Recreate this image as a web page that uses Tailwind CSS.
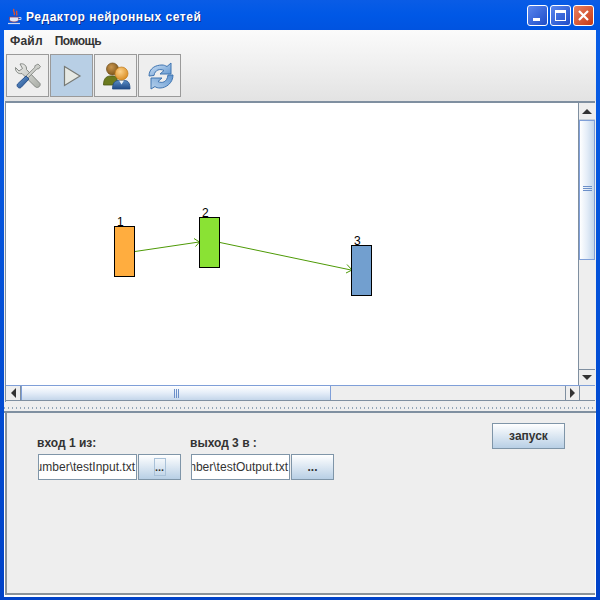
<!DOCTYPE html>
<html lang="ru">
<head>
  <meta charset="UTF-8" />
  <title>Редактор нейронных сетей</title>
  <script src="https://cdn.jsdelivr.net/npm/@tailwindcss/browser@4"></script>
</head>
<body class="w-[600px] h-[600px] overflow-hidden bg-[#0055e5] font-['Liberation_Sans',sans-serif]">
  <!-- окно -->
  <div class="w-[600px] h-[600px] flex flex-col bg-gradient-to-b from-[#0a5fe8] to-[#0042c8]">

    <!-- заголовок -->
    <div class="h-[30px] shrink-0 flex items-center pl-[7px] pr-[6px] bg-gradient-to-b from-[#0a5ce6] via-[#0058e6] to-[#0053e0]">
      <svg width="16" height="17" viewBox="0 0 16 17" class="shrink-0 mt-[2px]">
        <path d="M7 1c-2 2.500 2 3.500 0 6M10 3c-1.500 2 1 2.500-.5 4.500" fill="none" stroke="#e8502a" stroke-width="1.300"/>
        <path d="M2.500 9h9v2.500c0 1.500-1.500 2.500-4.500 2.500s-4.500-1-4.500-2.500z" fill="#dfe6f5" stroke="#8a3a5a" stroke-width="0.800"/>
        <path d="M11.500 9.500h2.500v2h-2.500" fill="none" stroke="#c4d0ea"/>
        <path d="M1 15.500h12" stroke="#d0d8f0" stroke-width="1.200"/>
      </svg>
      <div class="ml-[3px] mt-[3px] text-[12px] leading-none font-bold text-white tracking-[0.55px] [text-shadow:1px_1px_0_#0a2f90]">Редактор нейронных сетей</div>
      <div class="ml-auto flex gap-[2px]">
        <div class="w-[21px] h-[21px] rounded-[3px] border border-white bg-gradient-to-br from-[#5a86ee] to-[#1f4cc8] flex items-end pl-[5px] pb-[4px]">
          <div class="w-[7px] h-[3px] bg-white"></div>
        </div>
        <div class="w-[21px] h-[21px] rounded-[3px] border border-white bg-gradient-to-br from-[#5a86ee] to-[#1f4cc8] flex items-center justify-center">
          <div class="w-[11px] h-[11px] border border-white border-t-[3px]"></div>
        </div>
        <div class="w-[21px] h-[21px] rounded-[3px] border border-white bg-gradient-to-br from-[#e8805e] to-[#c8360e] flex items-center justify-center">
          <svg width="13" height="13" viewBox="0 0 13 13"><path d="M2 2l9 9M11 2l-9 9" stroke="#fff" stroke-width="2.200"/></svg>
        </div>
      </div>
    </div>

    <!-- клиентская область -->
    <div class="flex-1 min-h-0 mx-[4px] mb-[3px] flex flex-col bg-[#eeeeee]">

      <!-- меню и панель инструментов -->
      <div class="h-[71px] shrink-0 bg-gradient-to-b from-[#fbfbfb] to-[#e3e3e3] flex flex-col">
        <div class="h-[22px] flex items-center pl-[6px] gap-[12px] text-[12px] font-bold text-[#333333]">
          <span class="tracking-[0.2px]">Файл</span>
          <span class="tracking-[-0.5px]">Помощь</span>
        </div>
        <div class="flex gap-[1px] pl-[2px] pt-[2px]">
          <div class="w-[43px] h-[43px] border border-[#9a9a9a] bg-[#eeeeee] flex items-center justify-center">
            <svg width="30" height="30" viewBox="0 0 30 30">
              <defs>
                <linearGradient id="metal" x1="0" y1="0" x2="1" y2="1"><stop offset="0" stop-color="#eeeeec"/><stop offset="1" stop-color="#a9ada6"/></linearGradient>
                <linearGradient id="grip" x1="0" y1="0" x2="1" y2="1"><stop offset="0" stop-color="#6a9fd8"/><stop offset="1" stop-color="#204a87"/></linearGradient>
              </defs>
              <path d="M7 3c3.500-1 7 1.500 6.500 5.500L27 22.500c1 2.500-2 5-4.500 3.500L9 12.500C5.500 13.500 2 10.500 2.500 6.500L6 10l3.500-2.500z" fill="url(#metal)" stroke="#7b7f7a" stroke-width="0.900"/>
              <path d="M25 3l2.500 2.500-2 2.500-1.500-.2L14 18l-2-2 10-9.800-.2-1.400z" fill="url(#metal)" stroke="#7b7f7a" stroke-width="0.800"/>
              <path d="M13 15l3 3-8 8.500c-2 1.500-5-1-3.500-3.500z" fill="url(#grip)" stroke="#204a87" stroke-width="0.900"/>
            </svg>
          </div>
          <div class="w-[43px] h-[43px] border border-[#9a9a9a] bg-[#b8cfe5] flex items-center justify-center">
            <svg width="20" height="24" viewBox="0 0 20 24">
              <path d="M2.500 2.500L18 12 2.500 21.500z" fill="#e6e9e4" stroke="#777a75" stroke-width="1.200"/>
            </svg>
          </div>
          <div class="w-[43px] h-[43px] border border-[#9a9a9a] bg-[#eeeeee] flex items-center justify-center">
            <svg width="30" height="30" viewBox="0 0 30 30">
              <defs>
                <radialGradient id="headBack" cx="0.4" cy="0.35" r="0.7"><stop offset="0" stop-color="#c9954e"/><stop offset="1" stop-color="#7a5418"/></radialGradient>
                <radialGradient id="headFront" cx="0.4" cy="0.35" r="0.7"><stop offset="0" stop-color="#fcd28a"/><stop offset="1" stop-color="#d98a1e"/></radialGradient>
                <linearGradient id="bodyFront" x1="0" y1="0" x2="0" y2="1"><stop offset="0" stop-color="#5a8cc4"/><stop offset="1" stop-color="#204a87"/></linearGradient>
              </defs>
              <path d="M2.500 24c0-6 2.500-9 7-9h3c3 0 4 2 4 9z" fill="#6b7a1e" stroke="#4a5612" stroke-width="0.800"/>
              <circle cx="11.500" cy="8" r="6" fill="url(#headBack)" stroke="#6f4a16" stroke-width="0.700"/>
              <path d="M11.500 28c0-5.500 2-8.500 6-8.500h6c4 0 5.500 3 5.500 8.500z" fill="url(#bodyFront)" stroke="#204a87" stroke-width="0.800"/>
              <path d="M18 19.500h5l-2.500 4z" fill="#eef3f8"/>
              <circle cx="20.500" cy="12.500" r="6.500" fill="url(#headFront)" stroke="#c07a18" stroke-width="0.700"/>
            </svg>
          </div>
          <div class="w-[43px] h-[43px] border border-[#9a9a9a] bg-[#eeeeee] flex items-center justify-center">
            <svg width="30" height="30" viewBox="0 0 30 30">
              <defs>
                <linearGradient id="arrowTop" x1="0" y1="0" x2="1" y2="1"><stop offset="0" stop-color="#d6e6f6"/><stop offset="1" stop-color="#5f95d0"/></linearGradient>
                <linearGradient id="arrowBottom" x1="1" y1="0" x2="0" y2="1"><stop offset="0" stop-color="#5f95d0"/><stop offset="1" stop-color="#b8d2ec"/></linearGradient>
              </defs>
              <path d="M4 15C4 7 11 4 17 4c2 0 3 .5 5 1.500L26 2v11H15l4-3.500c-4-2-9-1-10 5z" fill="url(#arrowTop)" stroke="#3f74b0" stroke-width="1"/>
              <path d="M28 14c0 8-7 13-13 13-2 0-4-.5-5-1.500L6 28V17h11l-4 3.500c4 2 9 1 10-6.500z" fill="url(#arrowBottom)" stroke="#3f74b0" stroke-width="1"/>
            </svg>
          </div>
        </div>
      </div>

      <!-- панель холста со скроллбарами -->
      <div class="h-[301px] shrink-0 ml-[1px] mr-[1px] border-t-2 border-l border-[#7f8fa0] flex flex-col">
        <div class="flex h-[282px]">
          <div class="relative flex-1 bg-white overflow-hidden">
            <svg class="absolute left-0 top-0" width="572" height="282" viewBox="6 103 572 282">
              <path d="M135 251.500L199 242M194 238.500l5.500 3.500-4 4.500" fill="none" stroke="#4e9a06"/>
              <path d="M220 242.500L351 270M347 264.500l5 5.500-6 3" fill="none" stroke="#4e9a06"/>
            </svg>
            <div class="absolute left-[108px] top-[123px] w-[21px] h-[51px] border border-black bg-[#ffad3f]"></div>
            <div class="absolute left-[193px] top-[114px] w-[21px] h-[51px] border border-black bg-[#8ae234]"></div>
            <div class="absolute left-[345px] top-[142px] w-[21px] h-[51px] border border-black bg-[#729fcf]"></div>
            <div class="absolute left-[111px] top-[112px] text-[12px] leading-[14px] text-black">1</div>
            <div class="absolute left-[196px] top-[103px] text-[12px] leading-[14px] text-black">2</div>
            <div class="absolute left-[348px] top-[131px] text-[12px] leading-[14px] text-black">3</div>
          </div>
          <!-- вертикальный скроллбар -->
          <div class="w-[17px] shrink-0 flex flex-col bg-[#eeeeee] border-l border-[#7f8fa0]">
            <div class="h-[17px] flex items-center justify-center border-b border-[#c8d0d8]">
              <div class="w-0 h-0 border-x-[5px] border-x-transparent border-b-[5px] border-b-[#333333]"></div>
            </div>
            <div class="h-[140px] border border-[#7f9fd8] bg-gradient-to-r from-[#ffffff] via-[#e4edf8] to-[#c4d6ea] flex flex-col items-center justify-center gap-[1px] pb-[3px]">
              <div class="w-[9px] h-[1px] bg-[#6b8fc9]"></div>
              <div class="w-[9px] h-[1px] bg-[#6b8fc9]"></div>
              <div class="w-[9px] h-[1px] bg-[#6b8fc9]"></div>
            </div>
            <div class="flex-1"></div>
            <div class="h-[16px] flex items-center justify-center border-t border-[#7f8fa0]">
              <div class="w-0 h-0 border-x-[5px] border-x-transparent border-t-[5px] border-t-[#333333]"></div>
            </div>
          </div>
        </div>
        <!-- горизонтальный скроллбар -->
        <div class="h-[16px] flex bg-[#eeeeee] border-t border-[#7f9fd8] border-b border-b-[#7f8fa0]">
          <div class="w-[15px] flex items-center justify-center border-r border-[#7f8fa0]">
            <div class="w-0 h-0 border-y-[5px] border-y-transparent border-r-[5px] border-r-[#333333]"></div>
          </div>
          <div class="w-[310px] bg-gradient-to-b from-[#ffffff] via-[#e4edf8] to-[#c4d6ea] border-x border-[#7f9fd8] flex items-center justify-center gap-[1px]">
            <div class="w-[1px] h-[9px] bg-[#6b8fc9]"></div>
            <div class="w-[1px] h-[9px] bg-[#6b8fc9]"></div>
            <div class="w-[1px] h-[9px] bg-[#6b8fc9]"></div>
          </div>
          <div class="flex-1"></div>
          <div class="w-[15px] flex items-center justify-center border-x border-[#7f8fa0]">
            <div class="w-0 h-0 border-y-[5px] border-y-transparent border-l-[5px] border-l-[#333333]"></div>
          </div>
          <div class="w-[15px]"></div>
        </div>
      </div>

      <!-- разделитель -->
      <div class="h-[11px] shrink-0 bg-[#eeeeee] border-b-2 border-[#7f8fa0] flex items-end pb-[2px]">
        <div class="w-full h-[2px] bg-[linear-gradient(90deg,#94a6b8_0,#94a6b8_1px,transparent_1px)] bg-[length:4px_2px]"></div>
      </div>

      <!-- нижняя панель -->
      <div class="flex-1 min-h-0 flex flex-col bg-white">
        <div class="flex-1 min-h-0 ml-[1px] mr-[1px] mb-[2px] border-l-2 border-b-2 border-[#8a9299] pl-[31px] pr-[30px] flex bg-[#eeeeee]">
          <div class="w-[153px] pt-[23px] shrink-0">
            <div class="-ml-[1px] h-[14px] text-[12px] leading-[14px] font-bold text-[#333333]">вход 1 из:</div>
            <div class="flex gap-[1px] mt-[4px]">
              <div class="w-[99px] h-[26px] border border-[#7f95a8] bg-white overflow-hidden flex justify-end items-center pr-[1px] text-[12px] text-[#333333] whitespace-nowrap">D:\number\testInput.txt</div>
              <div class="w-[43px] h-[26px] border border-[#7f95a8] bg-gradient-to-b from-white to-[#b8cfe5] flex items-center justify-center">
                <div class="w-[12px] h-[18px] border border-[#a9c1d8] flex items-center justify-center text-[11px] font-bold text-[#333333] leading-none">...</div>
              </div>
            </div>
          </div>
          <div class="w-[143px] pt-[23px] shrink-0">
            <div class="-ml-[1px] h-[14px] text-[12px] leading-[14px] font-bold text-[#333333]">выход 3 в :</div>
            <div class="flex gap-[1px] mt-[4px]">
              <div class="w-[99px] h-[26px] border border-[#7f95a8] bg-white overflow-hidden flex justify-end items-center pr-[1px] text-[12px] text-[#333333] whitespace-nowrap">D:\number\testOutput.txt</div>
              <div class="w-[43px] h-[26px] border border-[#7f95a8] bg-gradient-to-b from-white to-[#b8cfe5] flex items-center justify-center text-[12px] font-bold text-[#333333] leading-none">...</div>
            </div>
          </div>
          <div class="ml-auto pt-[10px]">
            <div class="w-[73px] h-[26px] border border-[#7f95a8] bg-gradient-to-b from-white to-[#b8cfe5] flex items-center justify-center text-[12px] font-bold text-[#333333]">запуск</div>
          </div>
        </div>
      </div>
    </div>
  </div>
</body>
</html>
